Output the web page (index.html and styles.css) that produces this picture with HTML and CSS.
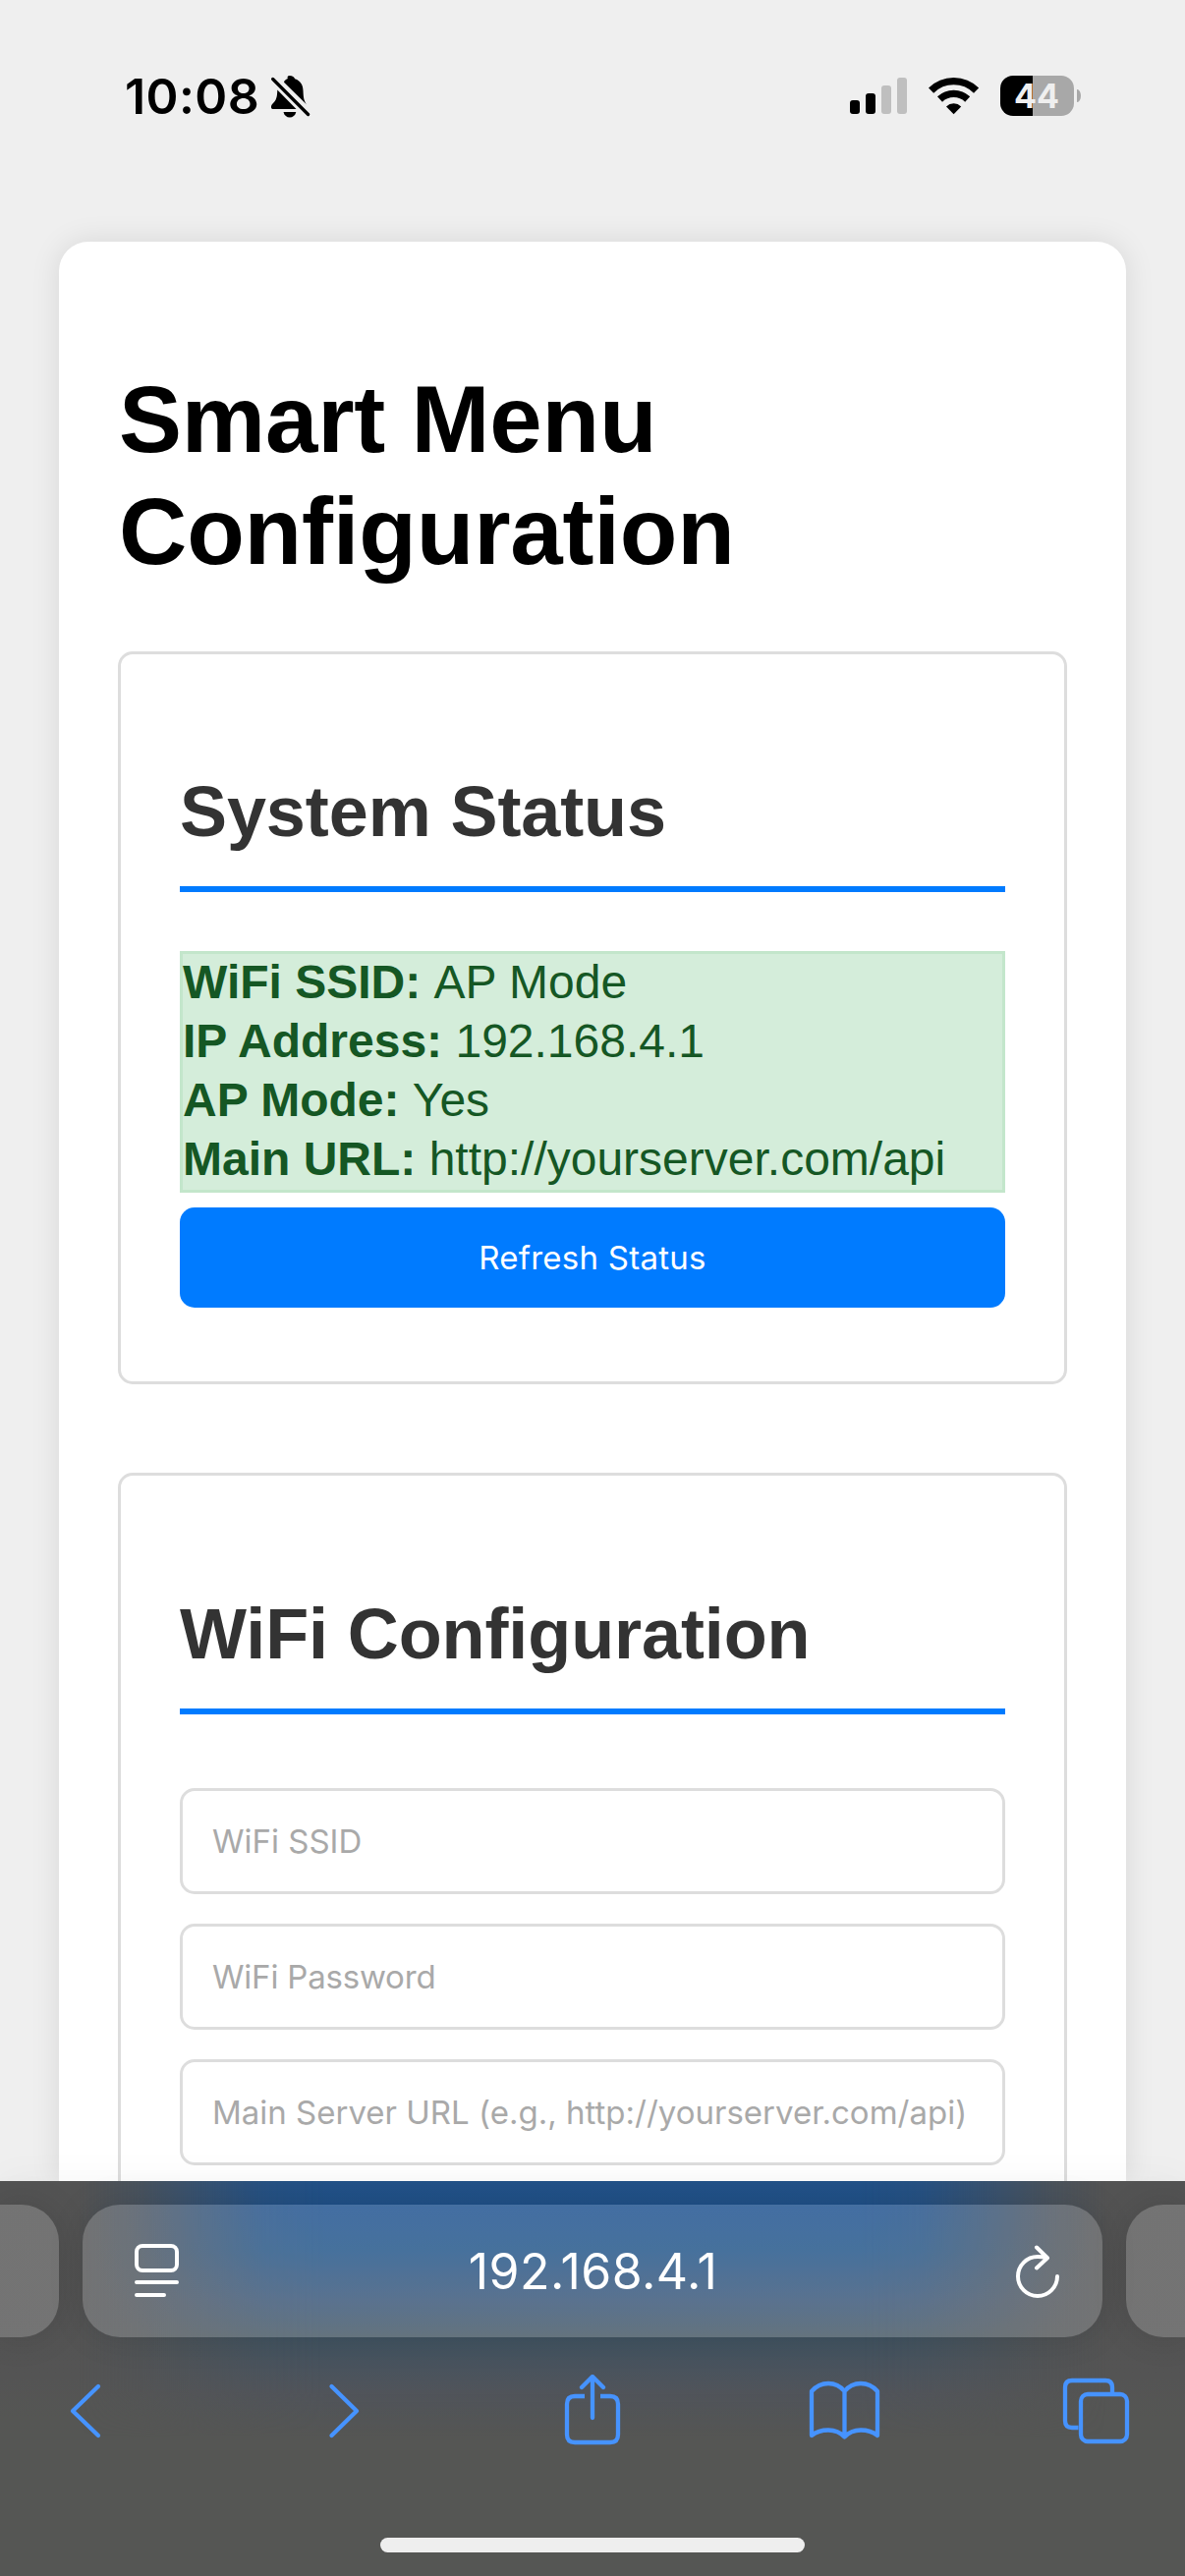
FILE: index.html
```
<!DOCTYPE html>
<html lang="en">
<head>
<meta charset="utf-8">
<title>Smart Menu Configuration</title>
<link rel="stylesheet" href="styles.css">
</head>
<body>
<div class="screen">
  <header class="statusbar">
    <span class="time">10:08</span>
    <svg class="bell" width="40" height="44" viewBox="276 76 40 44">
      <path d="M295 77c3.300 0 5 1.600 5.600 3.200c6 2 8.200 6.500 8.400 12c.3 6.500.5 10 3.600 14.200L289.500 83.800c.300-1.500 1.500-2.800 3.900-3.700C292.500 78.500 293.300 77 295 77z" transform="translate(-.5 0)"/>
      <path d="M282.300 91.500L301.500 111H278.500c-3.200 0-3.300-3.300-1-5.400c3.600-3.300 4.600-6.600 4.800-14.100z"/>
      <path d="M288.500 114h12.800c-.8 3.600-3.300 5.500-6.400 5.500s-5.600-1.900-6.400-5.500z"/>
      <path d="M277.700 80.500L313.600 116.500" stroke="#000" stroke-width="3.200" stroke-linecap="round"/>
    </svg>
    <div class="indicators">
      <svg width="58" height="38" viewBox="865 79 58 38">
        <rect x="865" y="102" width="10" height="14" rx="3"/>
        <rect x="881" y="95" width="10" height="21" rx="3"/>
        <g fill="#bfbfbf"><rect x="897" y="87" width="10" height="29" rx="3"/><rect x="913" y="79" width="10" height="37" rx="3"/></g>
      </svg>
      <svg class="wifi" width="52" height="38" viewBox="945 79 52 38">
        <g fill="none" stroke="#000" stroke-width="7.300"><path d="M947.600 92.200a32.500 32.500 0 0 1 46 0"/><path d="M956.500 101a20.500 20.500 0 0 1 28.200 0"/></g>
        <path d="M970.600 116.300L963 108.400a11 11 0 0 1 15.200 0z"/>
      </svg>
      <div class="battery"><span class="level">44</span><i class="nub"></i></div>
    </div>
  </header>

  <main class="card">
    <h1>Smart Menu Configuration</h1>
    <section class="panel">
      <h2>System Status</h2>
      <div class="status">
        <div><strong>WiFi SSID: </strong>AP Mode</div>
        <div><strong>IP Address: </strong>192.168.4.1</div>
        <div><strong>AP Mode: </strong>Yes</div>
        <div><strong>Main URL: </strong>http://yourserver.com/api</div>
      </div>
      <button class="refresh">Refresh Status</button>
    </section>
    <section class="panel">
      <h2>WiFi Configuration</h2>
      <input class="field" type="text" placeholder="WiFi SSID">
      <input class="field tight" type="text" placeholder="WiFi Password">
      <input class="field" type="text" placeholder="Main Server URL (e.g., http://yourserver.com/api)">
    </section>
  </main>

  <footer class="browserbar">
    <div class="tabs">
      <div class="pill side left"></div>
      <div class="pill address">
        <svg width="45" height="55" viewBox="137 2285 45 55" fill="none" stroke="#fff" stroke-width="4" stroke-linecap="round">
          <rect x="139" y="2287" width="41" height="25" rx="6"/><path d="M139 2324H180M139 2337H167"/>
        </svg>
        <span class="url">192.168.4.1</span>
        <svg width="46" height="56" viewBox="1033 2281 46 56" fill="none" stroke="#fff" stroke-width="4" stroke-linecap="round" stroke-linejoin="round">
          <path d="M1076 2314A20 20 0 1 1 1056 2294Q1061 2294 1065.500 2295M1055 2284.500L1066 2295.300L1055 2305.500"/>
        </svg>
      </div>
      <div class="pill side right"></div>
    </div>
    <nav class="tools">
      <svg viewBox="51 2417 74 74"><path d="M100 2429L74 2454L100 2479"/></svg>
      <svg viewBox="308 2417 74 74"><path d="M337.500 2429L363 2454L337.500 2479"/></svg>
      <svg viewBox="565 2417 74 74"><path d="M592 2430L603 2419L614 2430M603 2419V2461"/><path stroke-linecap="butt" d="M595 2439H585Q577 2439 577 2447V2478Q577 2486 585 2486H621Q629 2486 629 2478V2447Q629 2439 621 2439H611"/></svg>
      <svg viewBox="822 2417 74 74"><path d="M859.500 2434Q853 2426 843 2426Q833 2426 826 2434V2479Q833 2473.500 843 2473.500Q853 2473.500 859.500 2480.500Q866 2473.500 876 2473.500Q886 2473.500 893 2479V2434Q886 2426 876 2426Q866 2426 859.500 2434V2480.500"/></svg>
      <svg viewBox="1079 2417 74 74"><rect x="1100" y="2437" width="47" height="48" rx="7"/><path stroke-linecap="butt" d="M1097.500 2471H1091Q1084 2471 1084 2464V2430Q1084 2423 1091 2423H1125Q1132 2423 1132 2430V2435"/></svg>
    </nav>
    <div class="home"></div>
  </footer>
</div>
</body>
</html>
```
FILE: styles.css
```
* { box-sizing: border-box; }
body {
  margin: 0;
  background: #efefef;
  font: 48px/60px "Liberation Sans", Arial, sans-serif;
}
.screen {
  display: flex;
  flex-direction: column;
  width: 1206px;
  height: 2622px;
  overflow: hidden;
}
.statusbar {
  display: flex;
  align-items: flex-start;
  flex: none;
  height: 246px;
  padding: 76px 113px 0 127px;
  font-family: Inter, sans-serif;
}
.time {
  width: 149px;
  font-size: 50px;
  line-height: 44px;
  font-weight: 600;
  letter-spacing: 0.4px;
}
.indicators { display: flex; margin-left: auto; padding-top: 1px; }
.indicators svg { margin-top: 2px; }
.wifi { margin-left: 22px; }
.battery {
  position: relative;
  width: 75px;
  height: 41px;
  margin-left: 21px;
  border-radius: 13px;
  background: linear-gradient(90deg, #000 33px, #a8a8a8 33px);
}
.level {
  display: block;
  padding-right: 1px;
  color: #efefef;
  font-size: 34px;
  font-weight: 700;
  line-height: 42px;
  text-align: center;
}
.nub {
  position: absolute;
  left: 78px;
  top: 14px;
  width: 4px;
  height: 13px;
  border-radius: 0 4px 4px 0 / 0 7px 7px 0;
  background: #a8a8a8;
}

.card {
  flex: none;
  height: 1974px;
  margin: 0 60px;
  padding: 124px 60px 0;
  border-radius: 30px 30px 0 0;
  background: #fff;
  box-shadow: 0 0 30px rgba(0, 0, 0, 0.1);
  overflow: hidden;
}
h1 {
  margin: 0 0 65px;
  padding-left: 1px;
  font-size: 96px;
  line-height: 114px;
  letter-spacing: -0.2px;
}
.panel {
  margin-bottom: 90px;
  padding: 60px;
  border: 3px solid #ddd;
  border-radius: 15px;
}
.panel + .panel { padding-top: 61px; }
h2 {
  margin: 60px 0;
  padding-bottom: 36px;
  border-bottom: 6px solid #007bff;
  color: #333;
  font-size: 72px;
  line-height: 80px;
  letter-spacing: -0.1px;
}
.status {
  border: 3px solid #c3e6cb;
  background: #d4edda;
  color: #155724;
}
.status div { height: 60px; line-height: 57px; }
.status strong { white-space: pre; }
.refresh, .field {
  display: block;
  width: 100%;
  border-radius: 15px;
  font: 33px Inter, sans-serif;
}
.refresh {
  height: 102px;
  margin: 15px 0;
  border: 0;
  background: #007bff;
  color: #fff;
  letter-spacing: 0.25px;
}
.field {
  height: 108px;
  margin: 75px 0 30px;
  padding: 0 30px;
  border: 3px solid #ddd;
  background: #fff;
}
.field + .field { margin-top: 0; }
.field::placeholder { color: #a9a9a9; opacity: 1; }
.tight { letter-spacing: -0.2px; }

.browserbar {
  position: relative;
  isolation: isolate;
  flex: none;
  height: 402px;
  background: linear-gradient(#535353, #545454 50%, #555654 60%);
  box-shadow: 0 0 40px rgba(0, 0, 0, 0.04);
}
.browserbar::before {
  content: "";
  position: absolute;
  z-index: -1;
  inset: 0;
  background: linear-gradient(#225188, #215187 22px, #184d8d 26px, #1c5086 70px, #335276 120px, #405361 158px, #48535e 185px, #50545a 215px, rgba(85, 86, 84, 0) 260px);
  -webkit-mask-image: linear-gradient(90deg, transparent 80px, rgba(0, 0, 0, 0.2) 140px, rgba(0, 0, 0, 0.6) 210px, rgba(0, 0, 0, 0.9) 270px, #000 330px, #000 876px, rgba(0, 0, 0, 0.9) 936px, rgba(0, 0, 0, 0.6) 996px, rgba(0, 0, 0, 0.2) 1066px, transparent 1126px);
  mask-image: linear-gradient(90deg, transparent 80px, rgba(0, 0, 0, 0.2) 140px, rgba(0, 0, 0, 0.6) 210px, rgba(0, 0, 0, 0.9) 270px, #000 330px, #000 876px, rgba(0, 0, 0, 0.9) 936px, rgba(0, 0, 0, 0.6) 996px, rgba(0, 0, 0, 0.2) 1066px, transparent 1126px);
}
.tabs { display: flex; gap: 24px; padding-top: 24px; }
.pill {
  height: 135px;
  border-radius: 38px;
  background: rgba(255, 255, 255, 0.19);
  box-shadow: 0 0 36px rgba(0, 0, 0, 0.12);
}
.side { width: 60px; }
.left { border-radius: 0 38px 38px 0; }
.right { border-radius: 38px 0 0 38px; }
.address {
  display: flex;
  flex: 1;
  align-items: center;
  justify-content: space-between;
  padding: 0 43px 0 53px;
  color: #fff;
}
.url {
  margin-right: 8px;
  font: 50px/60px Inter, sans-serif;
  letter-spacing: 0.45px;
}
.tools {
  display: flex;
  justify-content: space-between;
  height: 74px;
  margin: 38px 53px 0 51px;
}
.tools svg {
  width: 74px;
  height: 74px;
  fill: none;
  stroke: #4693ff;
  stroke-width: 4.3;
  stroke-linecap: round;
  stroke-linejoin: round;
}
.home {
  width: 432px;
  height: 15px;
  margin: 92px auto 0;
  border-radius: 8px;
  background: #eee;
}
```
